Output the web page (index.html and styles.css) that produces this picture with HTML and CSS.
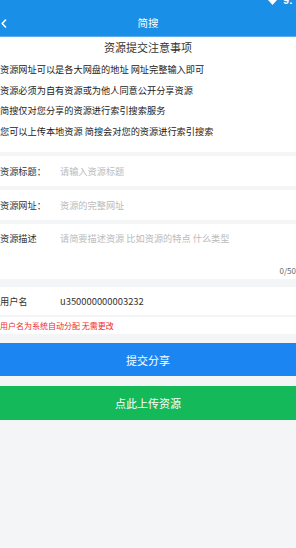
FILE: index.html
```html
<!DOCTYPE html>
<html lang="zh-CN">
<head>
  <meta charset="UTF-8">
  <meta name="viewport" content="width=device-width, initial-scale=1.0">
  <title>简搜</title>
  <link rel="stylesheet" href="styles.css">
</head>
<body>
<div class="header">
  <svg class="back" width="6" height="9" viewBox="0 0 6 9">
    <polyline points="4.5,1 1.2,4.5 4.5,8" fill="none" stroke="#fff" stroke-width="1.6" stroke-linecap="round" stroke-linejoin="round"/>
  </svg>
  <span class="title">简搜</span>
  <svg class="wifi" width="9" height="5" viewBox="0 0 9 5">
    <polygon points="0,0 9,0 4.5,5" fill="#fff"/>
  </svg>
  <span class="clock">9:</span>
</div>

<div class="notice">
  <div class="notice-title">资源提交注意事项</div>
  <div class="notice-item">资源网址可以是各大网盘的地址 网址完整输入即可</div>
  <div class="notice-item">资源必须为自有资源或为他人同意公开分享资源</div>
  <div class="notice-item">简搜仅对您分享的资源进行索引搜索服务</div>
  <div class="notice-item">您可以上传本地资源 简搜会对您的资源进行索引搜索</div>
</div>

<div class="field">
  <span class="field-label">资源标题：</span>
  <span class="placeholder">请输入资源标题</span>
</div>
<div class="field">
  <span class="field-label">资源网址：</span>
  <span class="placeholder">资源的完整网址</span>
</div>
<div class="field field-area">
  <div class="area-line">
    <span class="field-label">资源描述</span>
    <span class="placeholder">请简要描述资源 比如资源的特点 什么类型</span>
  </div>
  <div class="counter">0/50</div>
</div>

<div class="field field-user">
  <span class="field-label">用户名</span>
  <span class="user-value">u350000000003232</span>
</div>
<div class="hint">用户名为系统自动分配 无需更改</div>

<div class="btn btn-blue">提交分享</div>
<div class="btn btn-green">点此上传资源</div>
</body>
</html>
```

FILE: styles.css
```css
body {
  margin: 0;
  background-color: #f4f5f7;
  font-family: "Noto Sans CJK SC", "Noto Sans", sans-serif;
  color: #333;
}
.header {
  position: relative;
  height: 37px;
  box-sizing: border-box;
  padding-top: 9px;
  background-color: #1a8fe8;
  border-bottom: 1px solid #5aaef0;
  display: flex;
  align-items: center;
  justify-content: center;
}
.title {
  color: #fff;
  font-size: 10.5px;
}
.back {
  position: absolute;
  left: 1px;
  top: 19px;
}
.wifi {
  position: absolute;
  left: 268px;
  top: 0;
}
.clock {
  position: absolute;
  left: 283px;
  top: -5px;
  color: #fff;
  font-family: "Liberation Sans", sans-serif;
  font-weight: bold;
  font-size: 11px;
  line-height: 11px;
}
.notice {
  background-color: #fff;
  padding-bottom: 11px;
}
.notice-title {
  text-align: center;
  font-size: 11px;
  line-height: 20px;
  margin-bottom: 2px;
  color: #333;
}
.notice-item {
  font-size: 9.2px;
  line-height: 20.5px;
  color: #222;
}
.field {
  background-color: #fff;
  margin-top: 4px;
  height: 30px;
  display: flex;
  align-items: center;
  font-size: 9.2px;
}
.field-label {
  width: 60px;
  flex-shrink: 0;
  color: #333;
}
.placeholder {
  color: #bbb;
}
.field-area {
  height: 55px;
  flex-direction: column;
  align-items: stretch;
  justify-content: space-between;
  box-sizing: border-box;
  padding: 7px 0 2px;
}
.area-line {
  display: flex;
  line-height: 14px;
}
.counter {
  text-align: right;
  font-size: 8px;
  line-height: 12px;
  color: #666;
}
.field-user {
  margin-top: 8px;
  height: 28px;
}
.user-value {
  color: #333;
  font-size: 9.4px;
}
.hint {
  background-color: #fff;
  margin-top: 2px;
  height: 17px;
  line-height: 17px;
  font-size: 8px;
  color: #f02b2b;
}
.btn {
  color: #fff;
  font-size: 11px;
  text-align: center;
  display: flex;
  align-items: center;
  justify-content: center;
}
.btn-blue {
  margin-top: 9px;
  height: 33px;
  background-color: #1b86f2;
}
.btn-green {
  margin-top: 10px;
  height: 34px;
  background-color: #14b95a;
}
```
